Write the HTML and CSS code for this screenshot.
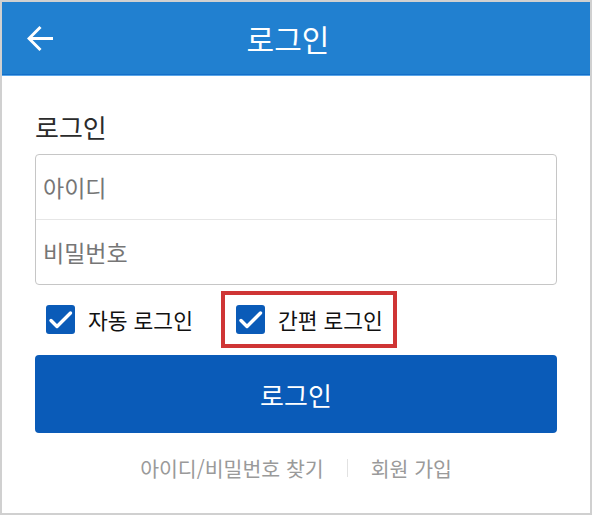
FILE: index.html
```html
<!DOCTYPE html>
<html lang="ko">
<head>
<meta charset="utf-8">
<title>로그인</title>
<link rel="stylesheet" href="styles.css">
</head>
<body>
<div class="frame">
  <header class="header">
    <div class="back">
      <svg class="back-icon" width="27" height="27" viewBox="0 0 27 27" aria-hidden="true">
        <path d="M2 13.5 H26 M13.5 2 L2 13.5 L13.5 25" fill="none" stroke="#fff" stroke-width="3"/>
      </svg>
    </div>
    <h1 class="title">로그인</h1>
    <div class="spacer"></div>
  </header>
  <main class="content">
    <h2 class="label">로그인</h2>
    <div class="fields">
      <div class="field">아이디</div>
      <div class="field">비밀번호</div>
    </div>
    <div class="options">
      <label class="opt">
        <span class="box"><svg width="29" height="29" viewBox="0 0 29 29" aria-hidden="true"><path d="M5 15.5 L11 21.5 L24.5 8" fill="none" stroke="#fff" stroke-width="3.4" stroke-linecap="round" stroke-linejoin="round"/></svg></span>
        <span class="opt-text">자동 로그인</span>
      </label>
      <label class="opt opt-marked">
        <span class="box"><svg width="29" height="29" viewBox="0 0 29 29" aria-hidden="true"><path d="M5 15.5 L11 21.5 L24.5 8" fill="none" stroke="#fff" stroke-width="3.4" stroke-linecap="round" stroke-linejoin="round"/></svg></span>
        <span class="opt-text">간편 로그인</span>
      </label>
    </div>
    <div class="login-btn">로그인</div>
    <nav class="links">
      <span class="link">아이디/비밀번호 찾기</span>
      <span class="sep"></span>
      <span class="link">회원 가입</span>
    </nav>
  </main>
</div>
</body>
</html>
```
FILE: styles.css
```css
* { box-sizing: border-box; }
html, body { margin: 0; padding: 0; background: #fff; }
body { font-family: "Noto Sans CJK KR", "Noto Sans", sans-serif; }

.frame {
  width: 592px;
  height: 515px;
  border: 2px solid #d0d0d0;
  background: #fff;
  display: flex;
  flex-direction: column;
}

.header {
  height: 73px;
  background: #2180d0;
  border-bottom: 1px solid #136fc9;
  box-shadow: 0 1px 0 #5aa6e8;
  display: flex;
  align-items: center;
  flex-shrink: 0;
}
.back {
  width: 70px;
  padding-left: 25px;
  display: flex;
  align-items: center;
  height: 100%;
}
.back-icon { display: block; }
.title {
  flex: 1;
  margin: 0;
  text-align: center;
  color: #fff;
  font-size: 30px;
  font-weight: 400;
  line-height: 38px;
}
.spacer { width: 86px; }

.content {
  padding: 36px 33px 0 33px;
  display: flex;
  flex-direction: column;
}
.label {
  margin: 0;
  font-size: 26px;
  font-weight: 400;
  line-height: 32px;
  color: #2b2b2b;
}
.fields {
  margin-top: 11px;
  border: 1px solid #c6c6c6;
  border-radius: 4px;
}
.field {
  height: 64px;
  display: flex;
  align-items: center;
  padding-left: 7px;
  font-size: 23px;
  color: #767676;
}
.field + .field { border-top: 1px solid #e6e6e6; height: 65px; }

.options {
  margin-top: 6px;
  display: flex;
  align-items: center;
  gap: 28px;
  padding-left: 11px;
}
.opt {
  display: flex;
  align-items: center;
  gap: 13px;
}
.box {
  width: 29px;
  height: 29px;
  border-radius: 3px;
  background: #0a5bb8;
  display: block;
}
.box svg { display: block; }
.opt-text {
  font-size: 21.5px;
  color: #111;
  line-height: 28px;
}
.opt-marked {
  border: 4px solid #cf3535;
  height: 57px;
  padding: 0 10px 0 11px;
}

.login-btn {
  margin-top: 7px;
  height: 78px;
  background: #0a5bb8;
  border-radius: 4px;
  color: #fff;
  font-size: 26px;
  display: flex;
  align-items: center;
  justify-content: center;
}

.links {
  margin-top: 23px;
  display: flex;
  justify-content: center;
  align-items: center;
  gap: 23px;
  font-size: 20.5px;
  line-height: 24px;
  color: #9a9a9a;
}
.sep {
  width: 1px;
  height: 18px;
  background: #e2e2e2;
}
```
